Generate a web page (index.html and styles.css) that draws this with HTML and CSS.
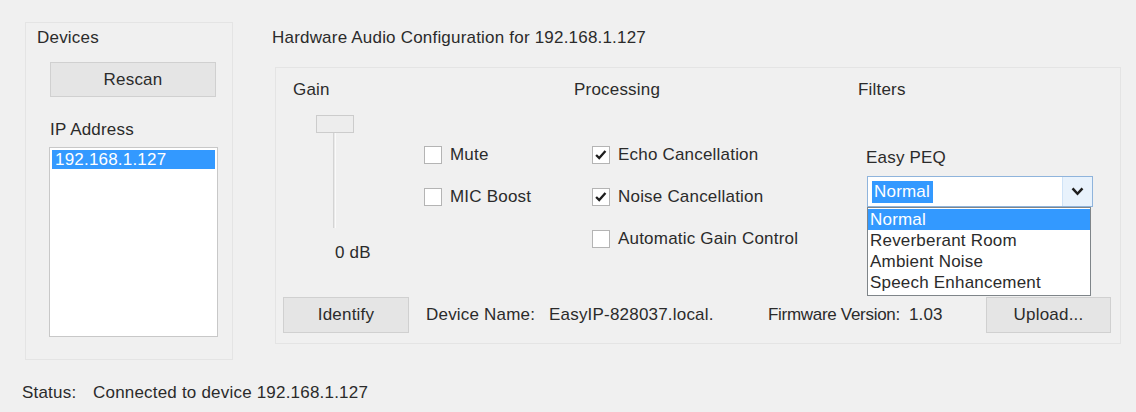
FILE: index.html
```html
<!DOCTYPE html>
<html>
<head>
<meta charset="utf-8">
<link rel="stylesheet" href="styles.css">
</head>
<body>
<div class="app">
  <div class="top">
    <section class="devices">
      <div class="group-title">Devices</div>
      <div class="btn rescan">Rescan</div>
      <div class="ip-label">IP Address</div>
      <div class="listbox">
        <div class="item selected">192.168.1.127</div>
      </div>
    </section>
    <section class="hw">
      <div class="group-title">Hardware Audio Configuration for 192.168.1.127</div>
      <div class="panel">
        <div class="cols">
          <div class="col gain">
            <div class="col-head">Gain</div>
            <div class="slider">
              <div class="thumb"></div>
              <div class="track"></div>
            </div>
            <div class="db">0 dB</div>
          </div>
          <div class="col toggles">
            <div class="rows">
              <div class="check"><span class="box"></span><span>Mute</span></div>
              <div class="check"><span class="box"></span><span>MIC Boost</span></div>
            </div>
          </div>
          <div class="col processing">
            <div class="col-head">Processing</div>
            <div class="rows indent">
              <div class="check"><span class="box"><svg viewBox="0 0 18 18" width="16" height="16"><path d="M3.5 9 L7 12.5 L14 4.5" fill="none" stroke="#1e1e1e" stroke-width="2.6"/></svg></span><span>Echo Cancellation</span></div>
              <div class="check"><span class="box"><svg viewBox="0 0 18 18" width="16" height="16"><path d="M3.5 9 L7 12.5 L14 4.5" fill="none" stroke="#1e1e1e" stroke-width="2.6"/></svg></span><span>Noise Cancellation</span></div>
              <div class="check"><span class="box"></span><span>Automatic Gain Control</span></div>
            </div>
          </div>
          <div class="col filters">
            <div class="col-head">Filters</div>
            <div class="peq-label">Easy PEQ</div>
            <div class="combo">
              <div class="combo-field"><span class="combo-sel">Normal</span></div>
              <div class="combo-arrow"><svg viewBox="0 0 14 10" width="13" height="9"><path d="M1.5 1.5 L7 7.5 L12.5 1.5" fill="none" stroke="#1e1e1e" stroke-width="2.8"/></svg></div>
              <div class="dropdown">
                <div class="opt active">Normal</div>
                <div class="opt">Reverberant Room</div>
                <div class="opt">Ambient Noise</div>
                <div class="opt">Speech Enhancement</div>
              </div>
            </div>
          </div>
        </div>
        <div class="bottom-row">
          <div class="btn identify">Identify</div>
          <span class="lbl name-lbl">Device Name:</span>
          <span class="val name-val">EasyIP-828037.local.</span>
          <span class="lbl fw-lbl">Firmware Version:</span>
          <span class="val fw-val">1.03</span>
          <div class="btn upload">Upload...</div>
        </div>
      </div>
    </section>
  </div>
  <div class="status">
    <span class="status-lbl">Status:</span>
    <span>Connected to device 192.168.1.127</span>
  </div>
</div>
</body>
</html>
```

FILE: styles.css
```css
* { box-sizing: border-box; }

body {
  margin: 0;
  width: 1136px;
  height: 412px;
  overflow: hidden;
  background: #f0f0f0;
  font-family: "Liberation Sans", Arial, sans-serif;
  font-size: 17px;
  line-height: 20px;
  letter-spacing: 0.2px;
  color: #2b2b2b;
}

.app {
  padding: 22px 0 0 22px;
}

.top {
  display: flex;
  align-items: flex-start;
  gap: 39px;
}

.group-title {
  height: 20px;
  white-space: nowrap;
}

.btn {
  display: flex;
  align-items: center;
  justify-content: center;
  background: #e5e5e5;
  border: 1px solid #d0d0d0;
}

/* Devices group */
.devices {
  margin-left: 3px;
  width: 208px;
  height: 338px;
  border: 1px solid #e4e4e4;
  padding: 5px 0 0 11px;
}

.rescan {
  margin: 14px 0 0 13px;
  width: 166px;
  height: 35px;
}

.ip-label {
  margin: 23px 0 0 13px;
}

.listbox {
  margin: 7px 0 0 12px;
  width: 169px;
  height: 190px;
  background: #fff;
  border: 1px solid #c8c8c8;
  padding: 2px;
}

.item {
  height: 19px;
  line-height: 19px;
  padding-left: 3px;
  white-space: nowrap;
}

.item.selected {
  background: #3399ff;
  color: #fff;
}

/* Hardware section */
.hw {
  width: 849px;
  padding-top: 6px;
}

.panel {
  margin: 19px 0 0 3px;
  width: 846px;
  height: 277px;
  border: 1px solid #e4e4e4;
  padding: 12px 9px 0 7px;
}

.cols {
  display: flex;
  height: 217px;
  padding-left: 10px;
}

.col-head {
  height: 20px;
}

.gain { width: 131px; }
.toggles { width: 150px; }
.processing { width: 284px; }
.filters { flex: 1; }

.slider {
  margin: 15px 0 0 23px;
  width: 38px;
}

.thumb {
  width: 38px;
  height: 18px;
  background: #ededed;
  border: 1px solid #cccccc;
}

.track {
  margin-left: 17px;
  width: 3px;
  height: 95px;
  background: #e9e9e9;
  border-left: 1px solid #d4d4d4;
  border-right: 1px solid #fafafa;
}

.db {
  margin: 15px 0 0 42px;
  white-space: nowrap;
}

.rows {
  display: flex;
  flex-direction: column;
  gap: 22px;
}

.toggles .rows {
  padding-top: 65px;
}

.processing .rows {
  margin-top: 45px;
}

.indent {
  padding-left: 18px;
}

.check {
  display: flex;
  align-items: center;
  gap: 8px;
  height: 20px;
  white-space: nowrap;
}

.box {
  width: 18px;
  height: 18px;
  flex: none;
  background: #fff;
  border: 1px solid #b4b4b4;
  display: flex;
  align-items: center;
  justify-content: center;
}

.peq-label {
  margin: 48px 0 0 8px;
}

.combo {
  position: relative;
  margin: 8px 0 0 9px;
  width: 226px;
  height: 31px;
  background: #fff;
  border: 1px solid #8fb4dc;
  display: flex;
  align-items: center;
}

.combo-field {
  flex: 1;
  padding-left: 4px;
  display: flex;
  align-items: center;
}

.combo-sel {
  background: #3399ff;
  color: #fff;
  height: 22px;
  line-height: 22px;
  padding: 0 3px 0 2px;
}

.combo-arrow {
  width: 30px;
  height: 100%;
  display: flex;
  align-items: center;
  justify-content: center;
  background: #e8f2fc;
  border-left: 1px solid #cfe3f7;
}

.dropdown {
  position: absolute;
  top: 30px;
  left: -1px;
  width: 224px;
  height: 89px;
  background: #fff;
  border: 1px solid #7f8589;
  padding-top: 1px;
}

.opt {
  height: 21px;
  line-height: 21px;
  padding-left: 2px;
  white-space: nowrap;
}

.opt.active {
  background: #3399ff;
  color: #fff;
}

.bottom-row {
  display: flex;
  align-items: center;
  height: 36px;
  white-space: nowrap;
}

.identify {
  width: 126px;
  height: 36px;
}

.name-lbl { margin-left: 17px; width: 123px; }
.name-val { width: 219px; }
.fw-lbl { letter-spacing: -0.3px; }
.fw-val { margin-left: 9px; }

.upload {
  margin-left: auto;
  width: 125px;
  height: 36px;
}

.status {
  display: flex;
  margin-top: 23px;
  white-space: nowrap;
}

.status-lbl {
  width: 71px;
}
```
